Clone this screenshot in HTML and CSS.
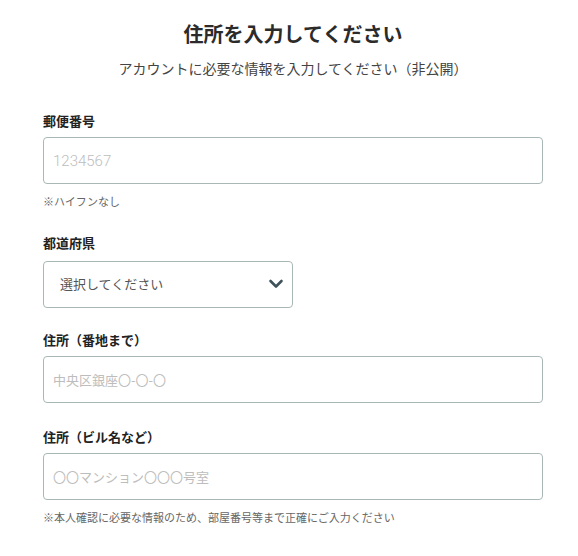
FILE: index.html
```html
<!DOCTYPE html>
<html lang="ja">
<head>
<meta charset="utf-8">
<link rel="stylesheet" href="styles.css">
</head>
<body>
<main class="page">
  <h1 class="title">住所を入力してください</h1>
  <p class="subtitle">アカウントに必要な情報を入力してください（非公開）</p>

  <div class="field field-zip">
    <label class="label">郵便番号</label>
    <input class="input input-zip" type="text" placeholder="1234567">
    <p class="note">※ハイフンなし</p>
  </div>

  <div class="field field-pref">
    <label class="label">都道府県</label>
    <div class="select">
      <span class="select-text">選択してください</span>
      <svg class="chevron" width="16" height="10" viewBox="0 0 16 10"><path d="M2.5 2 L8 7.5 L13.5 2" fill="none" stroke="#3f525b" stroke-width="2.6" stroke-linecap="round" stroke-linejoin="round"/></svg>
    </div>
  </div>

  <div class="field field-addr1">
    <label class="label">住所（番地まで）</label>
    <input class="input" type="text" placeholder="中央区銀座〇-〇-〇">
  </div>

  <div class="field field-addr2">
    <label class="label">住所（ビル名など）</label>
    <input class="input" type="text" placeholder="〇〇マンション〇〇〇号室">
    <p class="note">※本人確認に必要な情報のため、部屋番号等まで正確にご入力ください</p>
  </div>
</main>
</body>
</html>
```

FILE: styles.css
```css
* { box-sizing: border-box; }
body {
  margin: 0;
  background: #fff;
  font-family: "Noto Sans CJK JP", "Noto Sans", sans-serif;
  color: #222;
}
.page {
  width: 500px;
  margin-left: 43px;
  padding-top: 20px;
}
.title {
  margin: 0;
  font-size: 20px;
  line-height: 28px;
  font-weight: 700;
  text-align: center;
  color: #2b2b2b;
}
.subtitle {
  margin: 10px 0 0;
  font-size: 14px;
  line-height: 20px;
  text-align: center;
  color: #444;
}
.field { display: flex; flex-direction: column; }
.field-zip { margin-top: 33px; }
.field-pref { margin-top: 24px; }
.field-addr1 { margin-top: 22px; }
.field-addr2 { margin-top: 24px; }
.label {
  font-size: 13px;
  line-height: 20px;
  font-weight: 700;
  color: #222;
  margin-bottom: 6px;
}
.field-pref .label { margin-bottom: 8px; }
.input {
  width: 500px;
  height: 47px;
  border: 1px solid #a9b7b7;
  border-radius: 4px;
  padding: 0 9px;
  font-family: "Noto Sans CJK JP", "Noto Sans", sans-serif;
  font-size: 13px;
  color: #333;
  outline: none;
  background: #fff;
}
.input::placeholder { color: #bdbdbd; }
.input-zip {
  font-family: Roboto, "Noto Sans CJK JP", sans-serif;
  font-weight: 300;
  font-size: 15px;
}
.note {
  margin: 9px 0 0;
  font-size: 11px;
  line-height: 16px;
  color: #666;
}
.select {
  width: 250px;
  height: 47px;
  border: 1px solid #a9b7b7;
  border-radius: 4px;
  display: flex;
  align-items: center;
  justify-content: space-between;
  padding: 0 8px 0 16px;
}
.select-text {
  font-size: 13px;
  color: #555;
  margin-bottom: 3px;
}
.chevron { display: block; margin-bottom: 1px; }
```
